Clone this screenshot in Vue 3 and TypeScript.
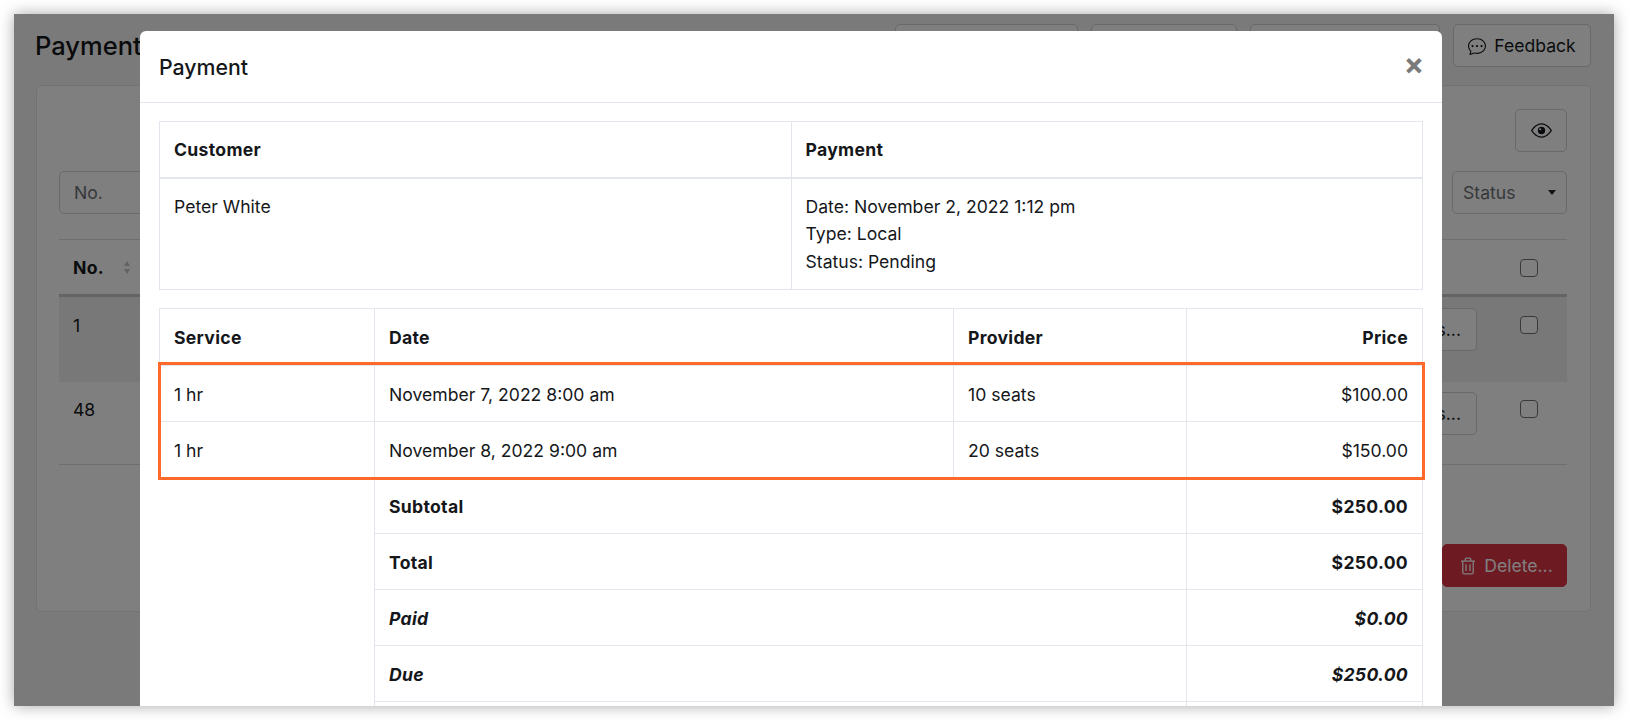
<script setup lang="ts">
interface Line { service: string; date: string; provider: string; price: string }
interface Sum { label: string; value: string; italic?: boolean }
const lines: Line[] = [
  { service: '1 hr', date: 'November 7, 2022 8:00 am', provider: '10 seats', price: '$100.00' },
  { service: '1 hr', date: 'November 8, 2022 9:00 am', provider: '20 seats', price: '$150.00' },
]
const sums: Sum[] = [
  { label: 'Subtotal', value: '$250.00' },
  { label: 'Total', value: '$250.00' },
  { label: 'Paid', value: '$0.00', italic: true },
  { label: 'Due', value: '$250.00', italic: true },
  { label: '', value: '' },
]
const rows = [
  { no: '1', shaded: true },
  { no: '48', shaded: false },
]
</script>

<template>
  <div class="shot">
    <div class="page">
      <header class="top">
        <h1>Payments</h1>
        <div class="top-actions">
          <button class="btn b1"></button>
          <button class="btn b2"></button>
          <button class="btn b3"></button>
          <button class="btn feedback">
            <svg viewBox="0 0 16 16" width="18" height="18" fill="currentColor">
              <path d="M5 8a1 1 0 1 1-2 0 1 1 0 0 1 2 0zm4 0a1 1 0 1 1-2 0 1 1 0 0 1 2 0zm3 1a1 1 0 1 0 0-2 1 1 0 0 0 0 2z" />
              <path d="m2.165 15.803.02-.004c1.83-.363 2.948-.842 3.468-1.105A9.06 9.06 0 0 0 8 15c4.418 0 8-3.134 8-7s-3.582-7-8-7-8 3.134-8 7c0 1.76.743 3.37 1.97 4.6a10.437 10.437 0 0 1-.524 2.318l-.003.011a10.722 10.722 0 0 1-.244.637c-.079.186.074.394.273.362a21.673 21.673 0 0 0 .693-.125zm.8-3.108a1 1 0 0 0-.287-.801C1.618 10.83 1 9.468 1 8c0-3.192 3.004-6 7-6s7 2.808 7 6c0 3.193-3.004 6-7 6a8.06 8.06 0 0 1-2.088-.272 1 1 0 0 0-.711.074c-.387.196-1.24.57-2.634.893a10.97 10.97 0 0 0 .398-2z" />
            </svg>
            Feedback
          </button>
        </div>
      </header>

      <section class="card">
        <div class="eye-row">
          <button class="btn eye">
            <svg viewBox="0 0 16 16" width="21" height="21" fill="currentColor">
              <path d="M16 8s-3-5.5-8-5.5S0 8 0 8s3 5.5 8 5.5S16 8 16 8zM1.173 8a13.133 13.133 0 0 1 1.66-2.043C4.12 4.668 5.88 3.5 8 3.5c2.12 0 3.879 1.168 5.168 2.457A13.133 13.133 0 0 1 14.828 8c-.058.087-.122.183-.195.288-.335.48-.83 1.12-1.465 1.755C11.879 11.332 10.119 12.5 8 12.5c-2.12 0-3.879-1.168-5.168-2.457A13.134 13.134 0 0 1 1.172 8z" />
              <path fill-rule="evenodd" d="M8 5.2a2.8 2.8 0 1 1 0 5.6 2.8 2.8 0 0 1 0-5.6zM7 6.2a.8.8 0 1 0 0 1.6.8.8 0 0 0 0-1.6z" />
            </svg>
          </button>
        </div>
        <div class="filters">
          <div class="field no-input">No.</div>
          <div class="field status">Status<span class="caret"></span></div>
        </div>
        <div class="list-head">
          <div class="no-head">
            <strong>No.</strong>
            <span class="sort"><i class="up"></i><i class="down"></i></span>
          </div>
          <span class="check"></span>
        </div>
        <div v-for="r in rows" :key="r.no" class="list-row" :class="r.shaded ? 'shaded' : 'plain'">
          <span class="no">{{ r.no }}</span>
          <button class="btn details">s...</button>
          <span class="check"></span>
        </div>
        <div class="card-foot">
          <button class="btn danger">
            <svg viewBox="0 0 16 18" width="16" height="18" fill="none" stroke="currentColor" stroke-width="1.3">
              <path d="M1 4.2h14M5.3 4V2.2c0-.6.4-1 1-1h3.4c.6 0 1 .4 1 1V4M2.8 4.2v11c0 1 .6 1.6 1.6 1.6h7.2c1 0 1.6-.6 1.6-1.6v-11M6 7.2v6.8M10 7.2v6.8" />
            </svg>
            Delete...
          </button>
        </div>
      </section>
    </div>

    <div class="overlay">
      <div class="modal">
        <div class="modal-head">
          <h2>Payment</h2>
          <span class="close">×</span>
        </div>
        <div class="modal-body">
          <table class="info">
            <thead>
              <tr><th>Customer</th><th>Payment</th></tr>
            </thead>
            <tbody>
              <tr>
                <td>Peter White</td>
                <td>Date: November 2, 2022 1:12 pm<br />Type: Local<br />Status: Pending</td>
              </tr>
            </tbody>
          </table>
          <div class="items-wrap">
            <table class="items">
              <colgroup>
                <col class="c1" /><col class="c2" /><col class="c3" /><col class="c4" />
              </colgroup>
              <thead>
                <tr><th>Service</th><th>Date</th><th>Provider</th><th class="r">Price</th></tr>
              </thead>
              <tbody>
                <tr v-for="l in lines" :key="l.date">
                  <td>{{ l.service }}</td><td>{{ l.date }}</td><td>{{ l.provider }}</td><td class="r">{{ l.price }}</td>
                </tr>
              </tbody>
              <tfoot>
                <tr v-for="(s, i) in sums" :key="i" :class="{ em: s.italic }">
                  <td class="blank"></td>
                  <th colspan="2">{{ s.label }}</th>
                  <th class="r">{{ s.value }}</th>
                </tr>
              </tfoot>
            </table>
            <div class="highlight"></div>
          </div>
        </div>
      </div>
    </div>
  </div>
</template>

<style>
html, body { margin: 0; background: #fff; }
</style>

<style scoped>
.shot {
  position: relative;
  width: 1600px;
  height: 692px;
  margin: 14px;
  overflow: hidden;
  box-shadow: 0 0 14px rgba(0, 0, 0, 0.35);
  font-family: Inter, "Liberation Sans", sans-serif;
  font-size: 17.6px;
  line-height: 27.5px;
  color: #15171a;
}
.page {
  height: 692px;
  box-sizing: border-box;
  background: #f4f4f4;
  padding: 10px 23px 0 22px;
}
.top { display: flex; justify-content: space-between; align-items: center; height: 43px; }
h1 { margin: 0 0 0 -1px; font-size: 25.5px; font-weight: 500; line-height: 42px; }
.top-actions { display: flex; gap: 13px; }
.btn {
  display: inline-flex;
  align-items: center;
  justify-content: center;
  gap: 8px;
  height: 43px;
  box-sizing: border-box;
  background: #fff;
  border: 1px solid #cfd2d6;
  border-radius: 5px;
  font: inherit;
  color: inherit;
  padding: 0;
}
.b1 { width: 183px; }
.b2 { width: 146px; }
.b3 { width: 190px; }
.feedback { width: 138px; }
.card {
  margin-top: 18px;
  height: 527px;
  box-sizing: border-box;
  background: #fff;
  border: 1px solid #e3e4e7;
  border-radius: 5px;
  padding: 23px 23px 0 22px;
}
.eye-row { display: flex; justify-content: flex-end; }
.eye { width: 52px; }
.filters { display: flex; justify-content: space-between; margin-top: 19px; }
.field {
  height: 43px;
  box-sizing: border-box;
  border: 1px solid #cfd2d6;
  border-radius: 5px;
  display: flex;
  align-items: center;
  color: #6c7075;
  padding: 0 10px 0 14px;
}
.no-input { width: 240px; }
.status { width: 115px; padding-left: 10px; justify-content: space-between; }
.caret { width: 0; height: 0; border-left: 4.5px solid transparent; border-right: 4.5px solid transparent; border-top: 5px solid #212429; }
.list-head {
  margin-top: 25px;
  height: 58px;
  box-sizing: border-box;
  border-top: 1px solid #dcdee2;
  border-bottom: 3px solid #c6c8cc;
  display: flex;
  align-items: center;
  justify-content: space-between;
  padding: 1px 29px 0 14px;
}
.no-head { display: flex; align-items: center; gap: 20px; }
.no-head strong { letter-spacing: 0.3px; }
.sort { display: flex; flex-direction: column; gap: 3px; }
.sort i { width: 0; height: 0; border-left: 3.5px solid transparent; border-right: 3.5px solid transparent; }
.sort .up { border-bottom: 5px solid #c4c4c4; }
.sort .down { border-top: 5px solid #c4c4c4; }
.check {
  width: 18px;
  height: 18px;
  box-sizing: border-box;
  border: 1px solid #6f7378;
  border-radius: 4px;
  background: #fff;
}
.list-row {
  box-sizing: border-box;
  display: flex;
  align-items: flex-start;
  padding: 10px 29px 0 14px;
}
.list-row.shaded { background: #f0f0f0; height: 85px; padding-top: 11px; }
.list-row.plain { height: 83px; border-bottom: 1px solid #dcdee2; }
.no { flex: 1; margin-top: 4px; }
.details { width: 140px; margin-right: 43px; justify-content: flex-end; padding-right: 15px; }
.list-row .check { margin-top: 8px; }
.card-foot { display: flex; justify-content: flex-end; margin-top: 79px; }
.danger {
  width: 125px;
  background: #dc3545;
  border-color: #dc3545;
  color: #fff;
  padding-left: 4px;
}
.overlay {
  position: absolute;
  inset: 0;
  background: rgba(0, 0, 0, 0.5);
  overflow: hidden;
}
.modal {
  width: 1302px;
  margin: 17px 0 0 126px;
  background: #fff;
  border-radius: 6px 6px 0 0;
}
.modal-head {
  height: 72px;
  box-sizing: border-box;
  border-bottom: 1px solid #e3e6ec;
  display: flex;
  align-items: center;
  justify-content: space-between;
  padding: 0 18px 0 19px;
}
h2 { margin: 0; font-size: 21.3px; font-weight: 500; line-height: 30px; }
.close { font-size: 30px; font-weight: 700; color: #7a7a7a; line-height: 30px; margin-top: -6px; }
.modal-body { padding: 18px 19px 0; }
table { width: 1264px; border-collapse: collapse; table-layout: fixed; }
th, td {
  border: 1px solid #e3e6ec;
  text-align: left;
  padding: 13px 14px;
  font-weight: 400;
  vertical-align: middle;
  box-sizing: border-box;
}
th { font-weight: 700; letter-spacing: 0.3px; }
.info thead th { border-bottom-width: 2px; height: 56px; }
.info td { padding: 14px; height: 111px; vertical-align: top; }
.items-wrap { position: relative; margin-top: 18px; }
.c1 { width: 215px; }
.c2 { width: 579px; }
.c3 { width: 233px; }
.items th, .items td { height: 56px; padding: 14px 14px 12px; }
.items thead th { height: 57px; }
.r { text-align: right; }
.blank { border: 0; }
.em th { font-style: italic; }
.highlight {
  position: absolute;
  left: -1px;
  top: 54px;
  width: 1267px;
  height: 118px;
  box-sizing: border-box;
  border: 3px solid #ff6a2b;
  pointer-events: none;
}
</style>
